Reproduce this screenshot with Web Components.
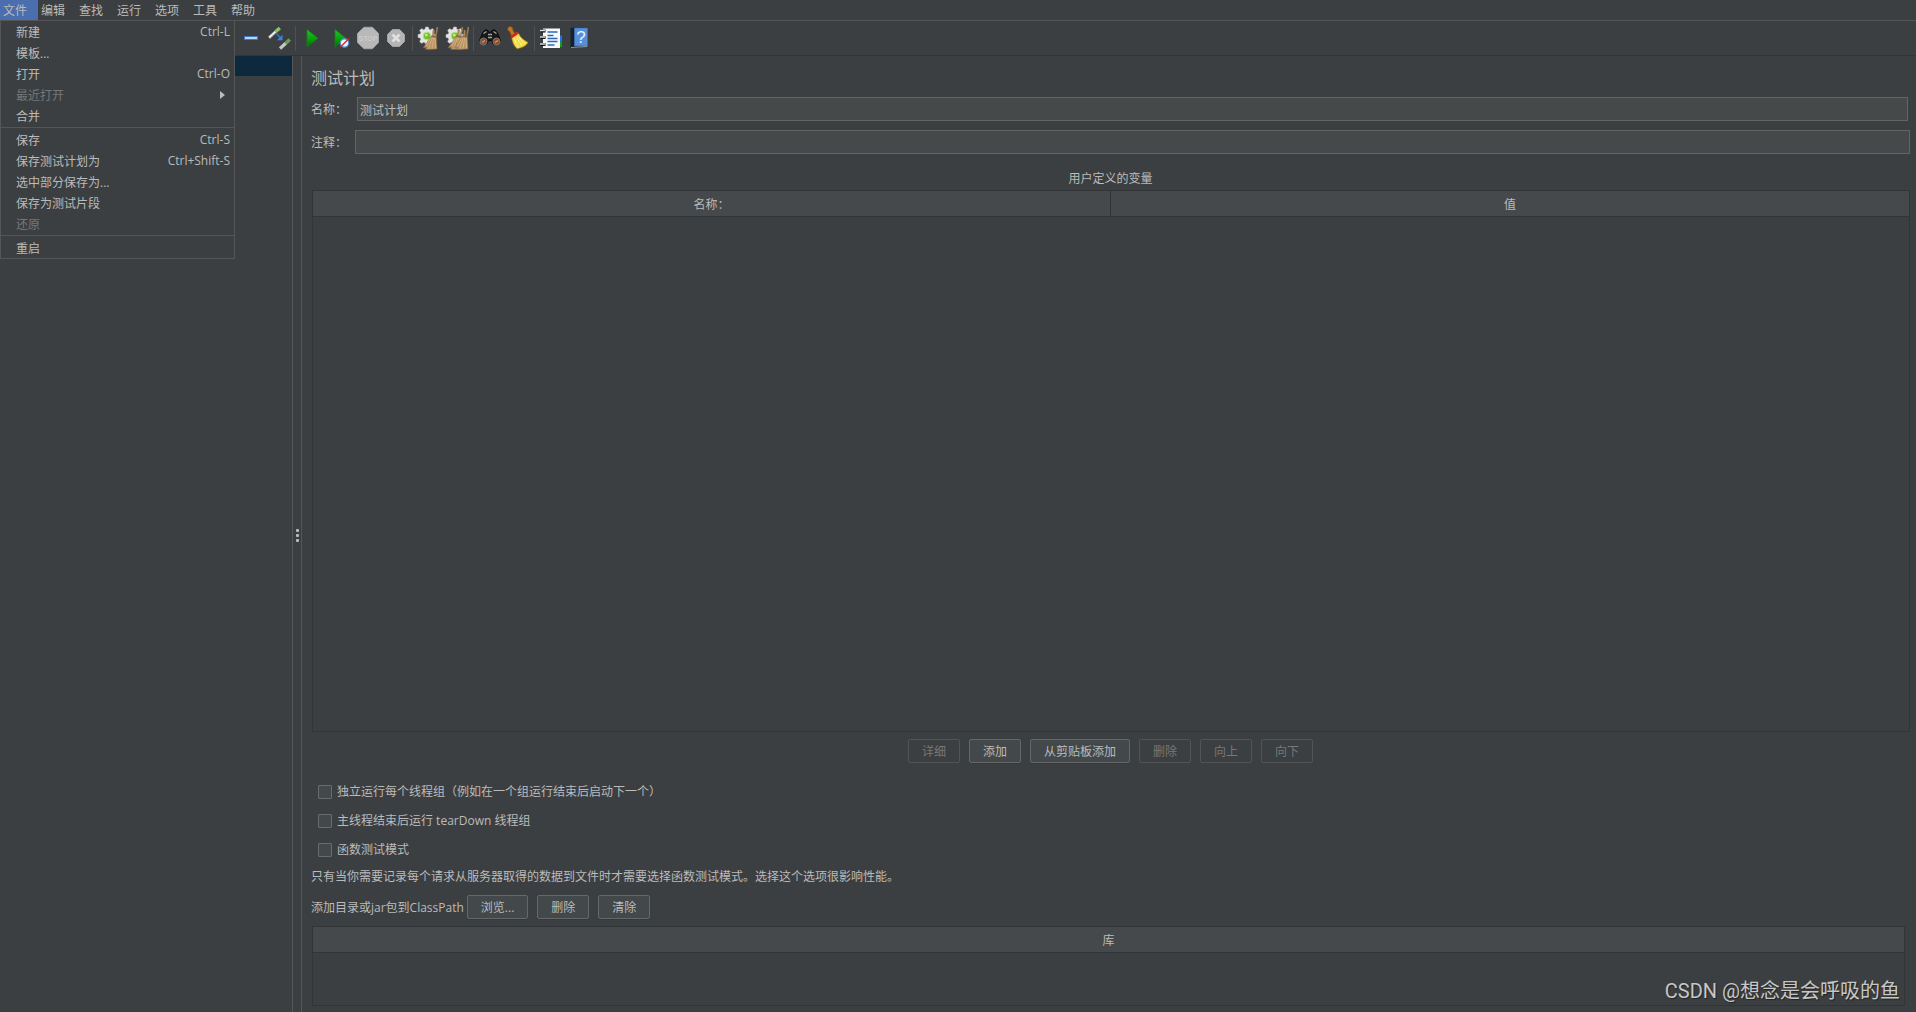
<!DOCTYPE html>
<html lang="zh-CN">
<head>
<meta charset="utf-8">
<title>测试计划</title>
<style>
  html, body { margin: 0; height: 100%; }
  body {
    --line: #555555;
    --grid: #323537;
    --head: #45494b;
    --field: #45494a;
    --edge: #646464;
    --dim: #777777;
    background: #3c3f41;
    color: #bbbbbb;
    font: 12px/20px "Open Sans", "Noto Sans CJK SC", sans-serif;
    overflow: hidden;
  }
</style>
</head>
<body>
<jm-app></jm-app>

<script>
const define = (name, html, setup) => {
  const template = document.createElement('template');
  template.innerHTML = '<style>*{box-sizing:border-box}button,input{font:inherit;color:inherit;margin:0}:host{display:block}</style>' + html;
  customElements.define(name, class extends HTMLElement {
    constructor() {
      super();
      this.attachShadow({ mode: 'open' }).append(template.content.cloneNode(true));
    }
    connectedCallback() { if (setup) setup(this, this.shadowRoot); }
  });
};

/* ---------- icons ---------- */
const gear = `<g fill="#e4e4e4" stroke="#b9b9b9" stroke-width=".5"><path d="M8.6 1h2.8l.5 2.2 1.6.6 1.9-1.2 2 2-1.2 1.9.7 1.6 2.1.5v2.8l-2.2.5-.6 1.6 1.2 1.9-2 2-1.9-1.2-1.6.7-.5 2.1H8.600l-.5-2.2-1.600-.6-1.900 1.200-2-2 1.200-1.900-.7-1.600L1 11.400V8.600l2.200-.5.6-1.600L2.600 4.600l2-2 1.900 1.200 1.600-.7z"/></g><circle cx="10" cy="10" r="3.800" fill="#6fbf1e" stroke="#b6dc93"/><circle cx="9.300" cy="9" r="1.500" fill="#b9ee70"/>`;
const brush = `<path d="M19.800 1l1.300.5-1.800 8.500.7 13-4.500.3-3.500.2-3.500-.3 1-1.700-3.300.2 3.800-5.200 3.500-5.500 2-1.200.5-5.800 1.400.3-.3 5.300 1.200.3z" fill="#b99265" stroke="#86663f" stroke-width=".5"/><path d="M13.500 12l-4 8M15.200 12l-3.400 10.500M16.700 12l-1.700 10.500M18.200 12l.2 10" stroke="#dcbd8e" stroke-width=".7"/><path d="M14.300 10l5 1" stroke="#77552f" stroke-width=".9"/>`;
const play = `<linearGradient id="g" x1="0" y1="0" x2="0" y2="1"><stop stop-color="#28c22c"/><stop offset=".5" stop-color="#07a50b"/><stop offset="1" stop-color="#036c08"/></linearGradient><path d="M7 3.500L18 12.300 7 21z" fill="url(#g)" stroke="#078a0b" stroke-width=".7"/>`;
const icons = {
  minus: `<rect x="5.500" y="10.500" width="13" height="3" fill="#bcd7f5" stroke="#3b77c2"/>`,
  toggle: `<path d="M2.500 12.500L9 6.200" stroke="#777" stroke-width="2"/><path d="M2 11.500L8.500 5.500" stroke="#ececec" stroke-width="2.200"/><path d="M8.500 5.800L12.800 2" stroke="#8bc36b" stroke-width="3.400"/><path d="M9.500 7.500l4 4.500" stroke="#2b74dc" stroke-width="1.500"/><path d="M15.500 8.800v5.500h-5.500z" fill="#3483ee"/><path d="M13 22.500l6-5.500" stroke="#c6c6c6" stroke-width="3.200"/><path d="M18.500 17.500l4.300-4" stroke="#6e9a58" stroke-width="3.400"/>`,
  play,
  playnow: play + `<circle cx="16.500" cy="17" r="4.200" fill="#edf3fb" stroke="#4e8fd0" stroke-width="1.300"/><path d="M12.500 21L21 12.500" stroke="#e22626" stroke-width="1.500"/>`,
  stop: `<path d="M8 1.300h8.500l6 6.200v9l-6 6.200H8l-6.500-6.200v-9z" fill="#b8b8b8" stroke="#a6a6a6"/><text x="12" y="15" text-anchor="middle" font-family="Liberation Sans" font-weight="700" font-size="7" fill="#cbcbcb">STOP</text>`,
  shut: `<path d="M8.500 3.500h7l5 5v7l-5 5h-7l-5-5v-7z" fill="#b4b4b4" stroke="#a3a3a3"/><path d="M8.500 8.500l7 7m0-7l-7 7" stroke="#e0e0e0" stroke-width="2.800"/>`,
  clear: gear + brush,
  clearall: `${gear}<g transform="translate(-3 0)">${brush}</g><g transform="translate(3 0)">${brush}</g>`,
  find: `<path d="M5 6l3-2.500 3 2 .5 3h1l.5-3 3-2L19 6l3.500 8.500-2 4h-5l-2-4h-3l-2 4h-5l-2-4z" fill="#191919" stroke="#090909"/><path d="M5.500 7.500l3-2M15.500 5.500l3 2M10 8.500h4M10 11.500h4" stroke="#a5a5a5" stroke-width="1.300"/><circle cx="5.500" cy="15.500" r="3.500" fill="#8a4d29" stroke="#777"/><circle cx="18.500" cy="15.500" r="3.500" fill="#8a4d29" stroke="#777"/><path d="M4 16.500l3-2M17 16.500l3-2" stroke="#dc9460" stroke-width="1.500"/>`,
  broom: `<path d="M2 1.500Q4-.5 6.500 1.500L7 4l2 4-3.500 2-2-4.500L1.500 4z" fill="#c07722" stroke="#7d4c10" stroke-width=".7"/><path d="M5.500 10.500l5-4L13 8q1 4 9 8.500-3 5-11 6.200-4.500-4-5.500-12.200z" fill="#f0d94a" stroke="#a78c12" stroke-width=".7"/><path d="M8.500 12.500q1 5 4 9M11 11q2 5.500 5 8.500M13 10.500q2 4 6 7.500" stroke="#fff3a0" stroke-width="1" fill="none"/><path d="M4.800 11.500L11.500 7" stroke="#d62121" stroke-width="2.600"/>`,
  log: `<path d="M20 9.500h3v6h-3z" fill="#1b76e8"/><path d="M20 15.500h3V21h-3z" fill="#159b20"/><rect x="4" y="2.500" width="17" height="19.500" fill="#f8f8f8"/><path d="M8.500 6h10M8.500 9.500h6M8.500 12.500h10M8.500 15.500h10M8.500 19h7" stroke="#2e66b8" stroke-width="1.300"/><path d="M1.500 5h5M1.500 11.500h5M1.500 18.500h5" stroke="#111" stroke-width="3"/><path d="M1 4.500h5M1 11h5M1 18h5" stroke="#ddd" stroke-width="1.300"/>`,
  help: `<path d="M3.500 2l3.500-.5h13.500V20L7 22H3.500z" fill="#17202d"/><path d="M7.500 2H20.500v18H7.500z" fill="#568fdb" stroke="#3a71bd" stroke-width=".7"/><path d="M4 21.500l16-1" stroke="#8d98a7"/><text x="14" y="17" text-anchor="middle" font-family="Liberation Sans" font-size="17" fill="#e9f2ff">?</text>`
};

/* ---------- menus ---------- */
define('jm-menu-title', `
  <style>
    button { display: block; width: 38px; height: 20px; padding: 2px 0 0 3px; border: 0; background: none; text-align: left; line-height: 18px; }
    :host([open]) button { background: #4b6eaf; }
  </style>
  <button type="button"><slot></slot></button>
  <slot name="menu"></slot>`);

define('jm-menu', `
  <style>
    :host { position: absolute; top: 20px; left: 0; width: 235px; border: 1px solid #555; background: #3c3f41; z-index: 5; }
  </style>
  <slot></slot>`);

define('jm-menu-item', `
  <style>
    button { display: flex; justify-content: space-between; align-items: center; width: 100%; height: 21px; padding: 0 4px 0 15px; border: 0; background: none; line-height: 21px; }
    button:disabled { color: var(--dim); }
    .name { padding-top: 2px; }
    i { display: none; margin-right: 5px; border: solid transparent; border-width: 4px 0 4px 5px; border-left-color: #bbb; }
    :host([submenu]) i { display: block; }
  </style>
  <button type="button"><span class="name"><slot></slot></span><span class="key"></span><i></i></button>`,
  (host, root) => {
    root.querySelector('button').disabled = host.hasAttribute('disabled');
    const key = host.getAttribute('key');
    if (key) root.querySelector('.key').textContent = key;
    else root.querySelector('.key').remove();
  });

define('jm-separator', `
  <style>:host { height: 3px; padding: 1px 0; } div { height: 1px; background: var(--line); }</style>
  <div></div>`);

define('jm-menubar', `
  <style>
    :host { display: flex; height: 21px; border-bottom: 1px solid var(--line); }
  </style>
  <jm-menu-title open>文件
    <jm-menu slot="menu">
      <jm-menu-item key="Ctrl-L">新建</jm-menu-item>
      <jm-menu-item>模板...</jm-menu-item>
      <jm-menu-item key="Ctrl-O">打开</jm-menu-item>
      <jm-menu-item disabled submenu>最近打开</jm-menu-item>
      <jm-menu-item>合并</jm-menu-item>
      <jm-separator></jm-separator>
      <jm-menu-item key="Ctrl-S">保存</jm-menu-item>
      <jm-menu-item key="Ctrl+Shift-S">保存测试计划为</jm-menu-item>
      <jm-menu-item>选中部分保存为...</jm-menu-item>
      <jm-menu-item>保存为测试片段</jm-menu-item>
      <jm-menu-item disabled>还原</jm-menu-item>
      <jm-separator></jm-separator>
      <jm-menu-item>重启</jm-menu-item>
    </jm-menu>
  </jm-menu-title>
  <jm-menu-title>编辑</jm-menu-title>
  <jm-menu-title>查找</jm-menu-title>
  <jm-menu-title>运行</jm-menu-title>
  <jm-menu-title>选项</jm-menu-title>
  <jm-menu-title>工具</jm-menu-title>
  <jm-menu-title>帮助</jm-menu-title>`);

/* ---------- toolbar ---------- */
define('jm-tool', `
  <style>
    button { display: flex; align-items: center; justify-content: center; width: 28px; height: 34px; padding: 0; border: 0; background: none; }
    svg { width: 24px; height: 24px; fill: none; }
  </style>
  <button type="button"><svg viewBox="0 0 24 24" aria-hidden="true"></svg></button>`,
  (host, root) => { root.querySelector('svg').innerHTML = icons[host.getAttribute('icon')]; });

define('jm-toolbar', `
  <style>
    :host { display: flex; align-items: center; height: 35px; padding-left: 237px; border-bottom: 1px solid var(--grid); }
    hr { width: 1px; height: 25px; margin: 0 2px; border: 0; background: #515151; }
  </style>
  <jm-tool icon="minus"></jm-tool><jm-tool icon="toggle"></jm-tool><hr>
  <jm-tool icon="play"></jm-tool><jm-tool icon="playnow"></jm-tool><jm-tool icon="stop"></jm-tool><jm-tool icon="shut"></jm-tool><hr>
  <jm-tool icon="clear"></jm-tool><jm-tool icon="clearall"></jm-tool><hr>
  <jm-tool icon="find"></jm-tool><jm-tool icon="broom"></jm-tool><hr>
  <jm-tool icon="log"></jm-tool><jm-tool icon="help"></jm-tool>`);

/* ---------- side tree and splitter ---------- */
define('jm-tree', `
  <style>:host { width: 292px; flex: none; } div { height: 20px; background: #0d293e; }</style>
  <div></div>`);

define('jm-splitter', `
  <style>
    :host { display: flex; flex-direction: column; align-items: center; justify-content: center; gap: 2px; flex: none; width: 10px; padding-top: 2px; border: solid var(--line); border-width: 0 1px; box-sizing: border-box; }
    i { width: 3px; height: 3px; border-radius: 1px; background: #bbb; }
  </style>
  <i></i><i></i><i></i>`);

/* ---------- form parts ---------- */
define('jm-field', `
  <style>
    :host { display: flex; align-items: center; }
    label { width: 44px; flex: none; height: 24px; padding-top: 2px; line-height: 22px; }
    input { flex: 1; min-width: 0; height: 24px; padding: 2px 2px 0; border: 1px solid var(--edge); background: var(--field); outline: 0; }
    :host([inset]) input { margin: 0 2px; }
  </style>
  <label for="f"></label><input id="f" type="text">`,
  (host, root) => {
    root.querySelector('label').textContent = host.getAttribute('label');
    root.querySelector('input').value = host.getAttribute('value') || '';
  });

define('jm-button', `
  <style>
    button { display: block; height: 24px; padding: 2px 13px 0; border: 1px solid #646868; border-radius: 2px; background: #43484a; line-height: 20px; box-shadow: 0 1px 0 #36393a; white-space: nowrap; }
    button:disabled { color: var(--dim); border-color: #515354; background: none; box-shadow: none; }
  </style>
  <button type="button"><slot></slot></button>`,
  (host, root) => { root.querySelector('button').disabled = host.hasAttribute('disabled'); });

define('jm-check', `
  <style>
    label { display: flex; align-items: center; gap: 5px; height: 29px; padding-left: 7px; }
    input { appearance: none; width: 14px; height: 14px; border: 1px solid #6b6b6b; border-radius: 1px; background: #43494a; }
  </style>
  <label><input type="checkbox"><span><slot></slot></span></label>`);

define('jm-table', `
  <style>
    :host { border: 1px solid var(--grid); }
    table { width: 100%; border-collapse: separate; border-spacing: 0; table-layout: fixed; }
    th { height: 26px; padding: 2px 0 0; background: var(--head); border-bottom: 1px solid var(--grid); font-weight: 400; line-height: 22px; text-align: center; }
    th:not(:last-child) { border-right: 1px solid var(--grid); }
  </style>
  <table><thead><tr></tr></thead><tbody></tbody></table>`,
  (host, root) => {
    const row = root.querySelector('tr');
    row.replaceChildren(...host.getAttribute('columns').split('|').map(name => {
      const th = document.createElement('th');
      th.scope = 'col';
      th.textContent = name;
      return th;
    }));
  });

define('jm-plan', `
  <style>
    :host { display: flex; flex-direction: column; flex: 1; min-width: 0; padding: 10px 6px 6px 9px; }
    h1 { margin: 0 0 7px; font-size: 16px; font-weight: 400; line-height: 24px; }
    .fields { display: grid; gap: 9px; }
    h2 { margin: 15px 0 1px; font-size: 12px; font-weight: 400; text-align: center; }
    jm-table { margin-left: 1px; }
    .vars { flex: 1; }
    .actions { display: flex; justify-content: center; gap: 9px; margin: 7px 0 14px; }
    p { margin: 0; line-height: 26px; }
    .path { display: flex; align-items: center; gap: 9px; margin: 5px 0 7px; }
    .path span { margin-right: -6px; padding-top: 2px; }
    .libs { height: 80px; margin-right: 5px; }
  </style>
  <h1>测试计划</h1>
  <div class="fields">
    <jm-field inset label="名称：" value="测试计划"></jm-field>
    <jm-field label="注释："></jm-field>
  </div>
  <h2>用户定义的变量</h2>
  <jm-table class="vars" columns="名称：|值"></jm-table>
  <div class="actions">
    <jm-button disabled>详细</jm-button>
    <jm-button>添加</jm-button>
    <jm-button>从剪贴板添加</jm-button>
    <jm-button disabled>删除</jm-button>
    <jm-button disabled>向上</jm-button>
    <jm-button disabled>向下</jm-button>
  </div>
  <jm-check>独立运行每个线程组（例如在一个组运行结束后启动下一个）</jm-check>
  <jm-check>主线程结束后运行 tearDown 线程组</jm-check>
  <jm-check>函数测试模式</jm-check>
  <p>只有当你需要记录每个请求从服务器取得的数据到文件时才需要选择函数测试模式。选择这个选项很影响性能。</p>
  <div class="path">
    <span>添加目录或jar包到ClassPath</span>
    <jm-button>浏览...</jm-button>
    <jm-button>删除</jm-button>
    <jm-button>清除</jm-button>
  </div>
  <jm-table class="libs" columns="库"></jm-table>`);

define('jm-watermark', `
  <style>
    :host { position: absolute; right: 16px; bottom: 6px; font: 20px/30px Roboto, "Noto Sans CJK SC", sans-serif; color: #c6c7c7; text-shadow: 1px 1px 1px #222; }
  </style>
  <slot></slot>`);

define('jm-app', `
  <style>
    :host { display: flex; flex-direction: column; min-height: 100vh; position: relative; }
    main { display: flex; flex: 1; }
  </style>
  <jm-menubar></jm-menubar>
  <jm-toolbar></jm-toolbar>
  <main>
    <jm-tree></jm-tree>
    <jm-splitter></jm-splitter>
    <jm-plan></jm-plan>
  </main>
  <jm-watermark>CSDN @想念是会呼吸的鱼</jm-watermark>`);
</script>
</body>
</html>
